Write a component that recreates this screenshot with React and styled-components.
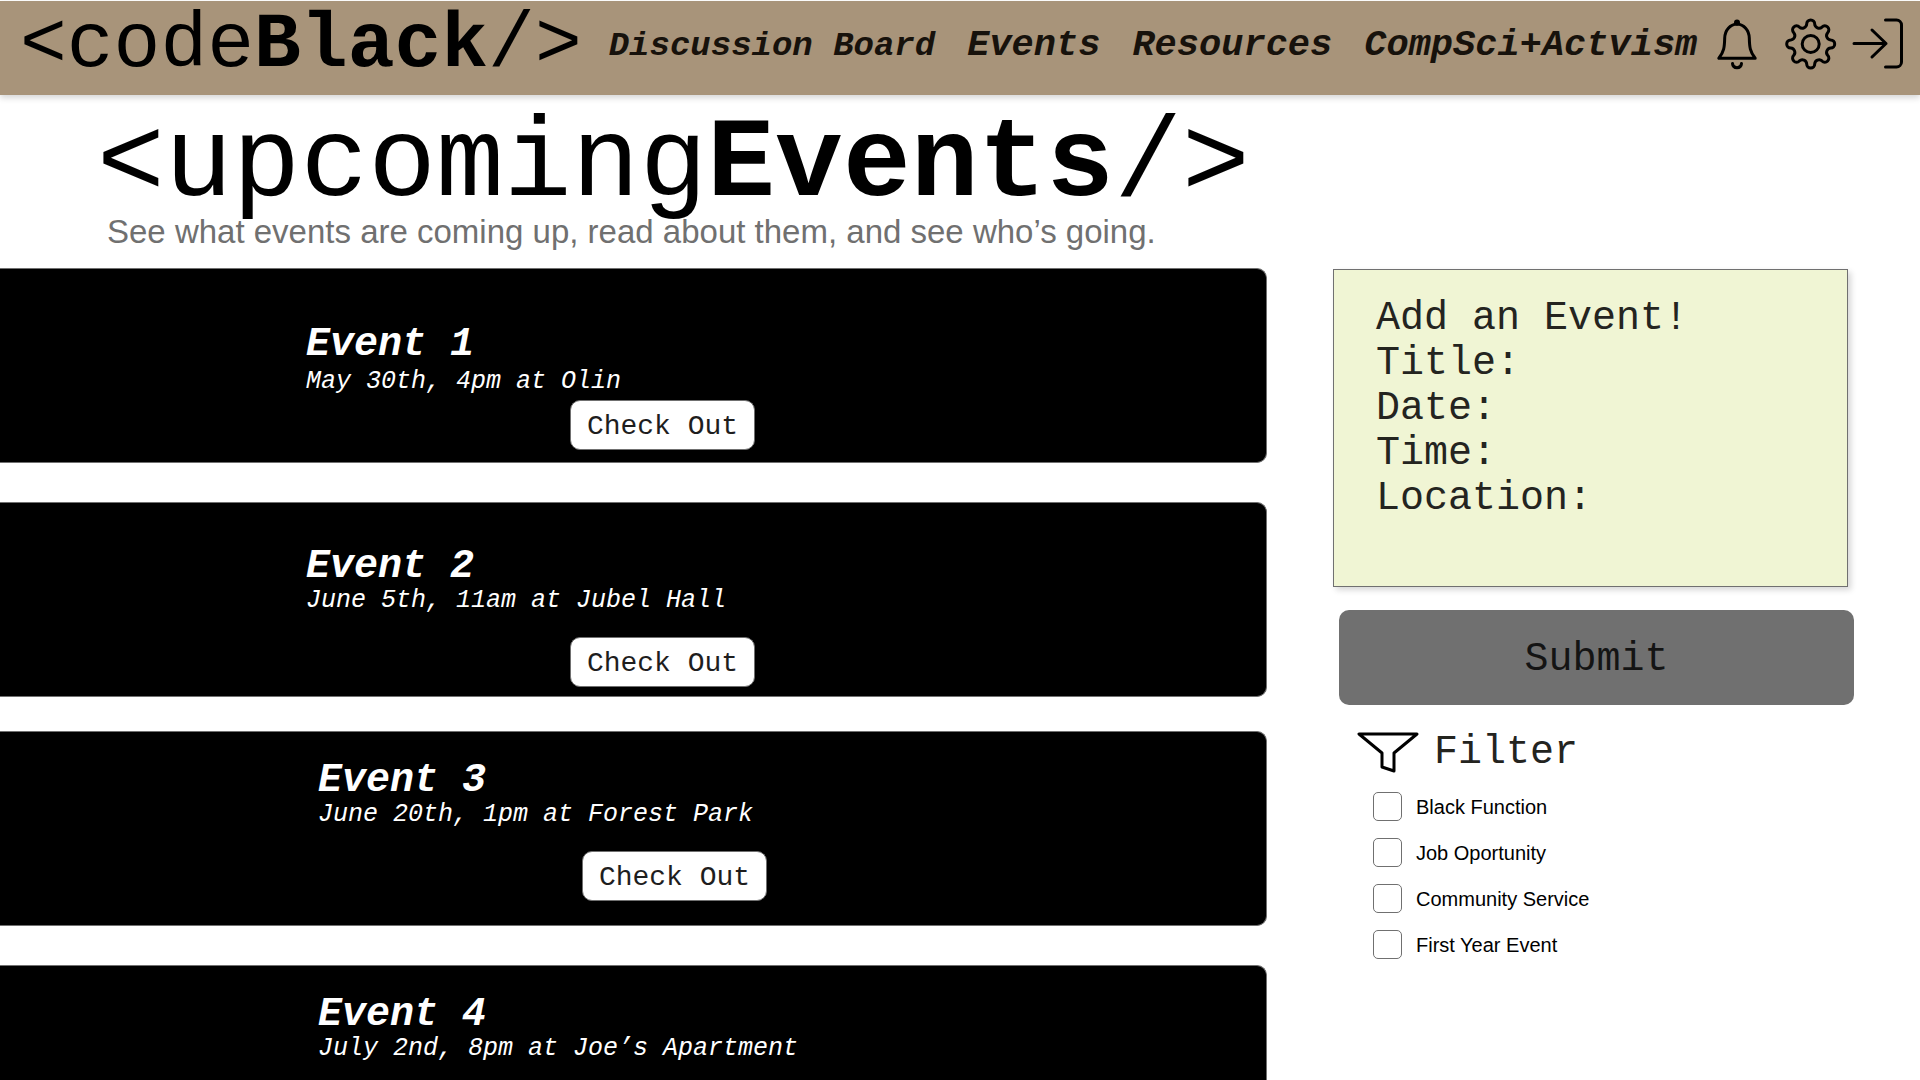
import React from "react";
import styled, { createGlobalStyle } from "styled-components";

const GlobalStyle = createGlobalStyle`
  * {
    box-sizing: border-box;
  }

  body {
    margin: 0;
    background-color: #fff;
    font-family: "Liberation Mono", monospace;
    color: #000;
  }
`;

const Header = styled.header`
  display: flex;
  align-items: center;
  height: 94px;
  margin-top: 1px;
  padding: 0 10px 6px 20px;
  background-color: #a8947a;
  box-shadow: 0 3px 6px rgba(0, 0, 0, 0.16);
`;

const Logo = styled.a`
  font-size: 78px;
  line-height: 88px;
  color: #000;
  text-decoration: none;
  white-space: nowrap;
`;

const Nav = styled.nav`
  display: flex;
  align-items: baseline;
  gap: 32px;
  margin-left: 27px;
`;

const NavLink = styled.a`
  font-size: ${({ $small }) => ($small ? "34px" : "37px")};
  line-height: 44px;
  font-weight: 700;
  font-style: italic;
  color: #17120c;
  text-decoration: none;
  white-space: nowrap;
`;

const Actions = styled.div`
  display: flex;
  align-items: center;
  gap: 10px;
  margin-left: auto;
`;

const IconButton = styled.button`
  width: 60px;
  height: 54px;
  padding: 0;
  border: none;
  background: none;
  cursor: pointer;
`;

const Icon = styled.svg`
  display: block;
  width: 100%;
  height: 100%;
  fill: none;
  stroke: #000;
  stroke-width: 3;
  stroke-linecap: round;
  stroke-linejoin: round;
`;

const Intro = styled.section`
  height: 173px;
  padding: 13px 0 0 97px;
`;

const PageTitle = styled.h1`
  margin: 0;
  font-size: 113px;
  line-height: 114px;
  font-weight: 400;
  white-space: nowrap;
`;

const Subtitle = styled.p`
  margin: -8px 0 0 10px;
  font-family: "Liberation Sans", sans-serif;
  font-size: 33px;
  line-height: 36px;
  color: #707070;
`;

const Content = styled.main`
  display: grid;
  grid-template-columns: 1267px minmax(0, 1fr);
  column-gap: 66px;
`;

const EventCard = styled.article`
  height: 195px;
  margin-bottom: ${({ $gap }) => $gap}px;
  padding-top: ${({ $top }) => $top}px;
  padding-left: ${({ $indent }) => $indent}px;
  border: 1px solid #707070;
  border-left: none;
  border-radius: 0 10px 10px 0;
  background-color: #000;
  color: #fff;
`;

const EventTitle = styled.h2`
  margin: 0;
  font-size: 40px;
  line-height: 40px;
  font-style: italic;
`;

const EventInfo = styled.p`
  margin: ${({ $tight }) => ($tight ? "3px 0 4px" : "0 0 22px")};
  font-size: 25px;
  line-height: 28px;
  font-style: italic;
`;

const CheckOut = styled.button`
  display: block;
  width: 185px;
  height: 50px;
  margin-left: 264px;
  padding: 2px 0 0;
  border: 1px solid #707070;
  border-radius: 10px;
  background-color: #fff;
  font-family: inherit;
  font-size: 28px;
  color: #1e1e1e;
  cursor: pointer;
`;

const Sidebar = styled.aside`
  padding: 1px 66px 0 0;
`;

const EventForm = styled.form`
  margin: 0;
`;

const Fields = styled.div`
  height: 318px;
  margin-right: 6px;
  padding: 26px 20px 0 42px;
  border: 1px solid #707070;
  background-color: #f0f5d4;
  box-shadow: 3px 3px 6px rgba(0, 0, 0, 0.16);
  font-size: 40px;
  line-height: 45px;
  color: #24241f;
`;

const FormTitle = styled.h2`
  margin: 0;
  font-size: 40px;
  font-weight: 400;
`;

const Field = styled.label`
  display: flex;
`;

const FieldInput = styled.input`
  flex: 1;
  min-width: 0;
  padding: 0;
  border: none;
  outline: none;
  background: transparent;
  font: inherit;
  color: inherit;
`;

const Submit = styled.button`
  display: block;
  width: calc(100% - 6px);
  height: 95px;
  margin: 23px 0 0 6px;
  padding: 3px 0 0;
  border: none;
  border-radius: 10px;
  background-color: #707070;
  font-family: inherit;
  font-size: 40px;
  color: #141414;
  cursor: pointer;
`;

const FilterHead = styled.div`
  display: flex;
  align-items: center;
  gap: 15px;
  margin: 24px 0 0 24px;
`;

const FunnelIcon = styled(Icon)`
  width: 62px;
  height: 42px;
`;

const FilterTitle = styled.h2`
  margin: 0;
  font-size: 40px;
  line-height: 48px;
  font-weight: 400;
  color: #24241f;
`;

const FilterList = styled.div`
  display: flex;
  flex-direction: column;
  gap: 17px;
  margin: 15px 0 0 40px;
`;

const FilterOption = styled.label`
  display: flex;
  align-items: center;
  gap: 14px;
  font-family: "Liberation Sans", sans-serif;
  font-size: 20px;
  line-height: 24px;
`;

const Checkbox = styled.input`
  appearance: none;
  width: 29px;
  height: 29px;
  margin: 0;
  border: 1px solid #707070;
  border-radius: 5px;
  background-color: #fff;

  &:checked {
    background-color: #707070;
  }
`;

const links = ["Discussion Board", "Events", "Resources", "CompSci+Actvism"];

const events = [
  {
    title: "Event 1",
    info: "May 30th, 4pm at Olin",
    top: 56,
    indent: 306,
    gap: 39,
    tight: true,
  },
  {
    title: "Event 2",
    info: "June 5th, 11am at Jubel Hall",
    top: 44,
    indent: 306,
    gap: 34,
  },
  {
    title: "Event 3",
    info: "June 20th, 1pm at Forest Park",
    top: 29,
    indent: 318,
    gap: 39,
  },
  {
    title: "Event 4",
    info: "July 2nd, 8pm at Joe’s Apartment",
    top: 29,
    indent: 318,
    gap: 0,
  },
];

const fields = ["Title", "Date", "Time", "Location"];

const filters = [
  "Black Function",
  "Job Oportunity",
  "Community Service",
  "First Year Event",
];

// eight round teeth, each one joined to the next by a small valley
const gearPath = () => {
  const point = (angle, side) => {
    const a = (angle * Math.PI) / 180;
    const x = 30.7 + 20 * Math.sin(a) + side * 4 * Math.cos(a);
    const y = 26 - 20 * Math.cos(a) + side * 4 * Math.sin(a);
    return `${x.toFixed(2)} ${y.toFixed(2)}`;
  };
  let d = `M${point(0, -1)}`;
  for (let angle = 0; angle < 360; angle += 45) {
    d += `A4 4 0 0 1 ${point(angle, 1)}`;
    d += `A4.4 4.4 0 0 0 ${point(angle + 45, -1)}`;
  }
  return d + "Z";
};

const App = () => {
  return (
    <>
      <GlobalStyle />
      <Header>
        <Logo href="#">
          &lt;code<b>Black</b>/&gt;
        </Logo>
        <Nav>
          {links.map((link, i) => (
            <NavLink key={link} href="#" $small={i === 0}>
              {link}
            </NavLink>
          ))}
        </Nav>
        <Actions>
          <IconButton aria-label="Notifications">
            <Icon viewBox="0 0 60 54">
              <path d="M8.8 40.3h36.4C40 34 39.5 29 39.3 20 39 12 34 6.5 27 6c-7 .5-12 6-12.3 14C14.5 29 14 34 8.8 40.3z" />
              <path d="M22.5 45.5c.5 5.5 8.5 5.5 9 0" />
              <circle cx="27" cy="4.5" r="1.5" />
            </Icon>
          </IconButton>
          <IconButton aria-label="Settings">
            <Icon viewBox="0 0 60 54">
              <path d={gearPath()} />
              <circle cx="30.7" cy="26" r="8.5" />
            </Icon>
          </IconButton>
          <IconButton aria-label="Log out">
            <Icon viewBox="0 0 60 54">
              <path d="M4 25.5h32M22 12l14 13.5L22 39" />
              <path d="M35.5 2h11a5 5 0 0 1 5 5v37a5 5 0 0 1-5 5h-11" />
            </Icon>
          </IconButton>
        </Actions>
      </Header>
      <Intro>
        <PageTitle>
          &lt;upcoming<b>Events</b>/&gt;
        </PageTitle>
        <Subtitle>
          See what events are coming up, read about them, and see who’s going.
        </Subtitle>
      </Intro>
      <Content>
        <div>
          {events.map(({ title, info, top, indent, gap, tight }) => (
            <EventCard key={title} $top={top} $indent={indent} $gap={gap}>
              <EventTitle>{title}</EventTitle>
              <EventInfo $tight={tight}>{info}</EventInfo>
              <CheckOut>Check Out</CheckOut>
            </EventCard>
          ))}
        </div>
        <Sidebar>
          <EventForm>
            <Fields>
              <FormTitle>Add an Event!</FormTitle>
              {fields.map((field) => (
                <Field key={field}>
                  {field}:
                  <FieldInput name={field} />
                </Field>
              ))}
            </Fields>
            <Submit type="button">Submit</Submit>
          </EventForm>
          <FilterHead>
            <FunnelIcon viewBox="0 0 62 42">
              <path d="M2 2h58L37 21v18l-12-4V21z" />
            </FunnelIcon>
            <FilterTitle>Filter</FilterTitle>
          </FilterHead>
          <FilterList>
            {filters.map((filter) => (
              <FilterOption key={filter}>
                <Checkbox type="checkbox" />
                {filter}
              </FilterOption>
            ))}
          </FilterList>
        </Sidebar>
      </Content>
    </>
  );
};

export default App;
